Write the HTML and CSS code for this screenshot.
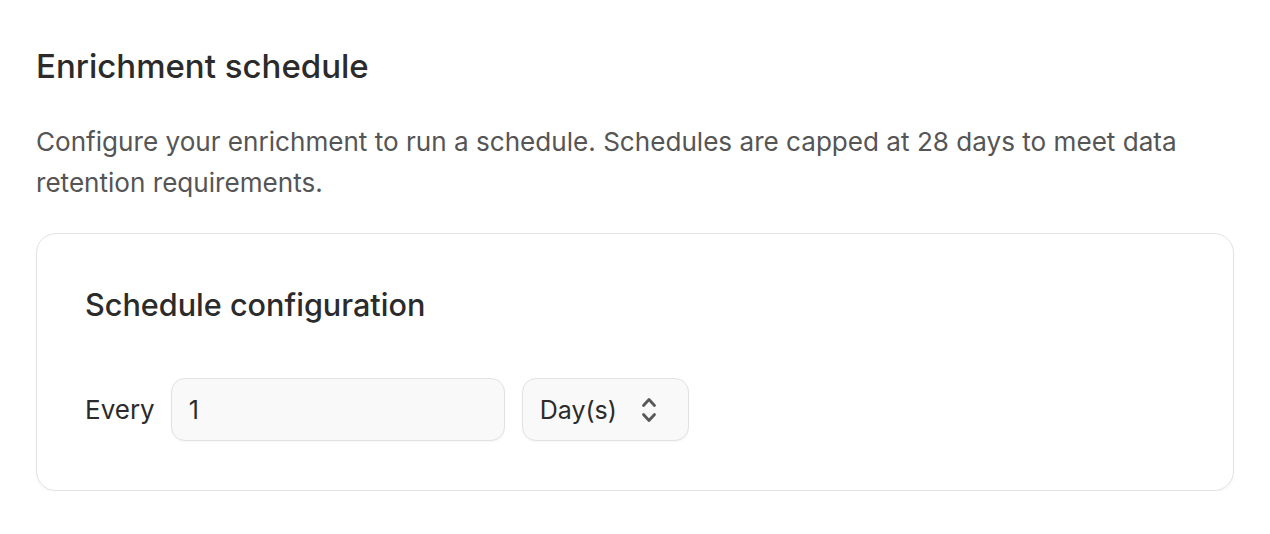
FILE: index.html
```html
<!DOCTYPE html>
<html>
  <head>
    <link rel="stylesheet" href="styles.css">
  </head>
  <body>
    <div class="page">
      <h1>Enrichment schedule</h1>
      <p class="intro">
        Configure your enrichment to run a schedule. Schedules are capped at 28 days to meet data retention requirements.
      </p>

      <div class="card">
        <h2>Schedule configuration</h2>
        <div class="row">
          <span class="label">Every</span>
          <div class="field number">1</div>
          <div class="field select">
            <span>Day(s)</span>
            <svg width="16" height="28" viewBox="0 0 16 28" fill="none" stroke="#585858" stroke-width="2.8" stroke-linecap="round" stroke-linejoin="round">
              <path d="M2.5 9.5 L8 3.5 L13.5 9.5"/>
              <path d="M2.5 18.5 L8 24.5 L13.5 18.5"/>
            </svg>
          </div>
        </div>
      </div>
    </div>
  </body>
</html>
```

FILE: styles.css
```css
body {
    margin: 0;
    background: #fff;
    font-family: Inter, "Noto Sans", sans-serif;
    color: #2b2b2b;
}
.page {
    padding: 44px 36px 0 36px;
}
h1 {
    font-size: 33px;
    font-weight: 500;
    margin: 0;
    line-height: 44px;
}
.intro {
    font-size: 26.1px;
    line-height: 41px;
    color: #555;
    margin: 33px 0 0 0;
    max-width: 1198px;
}
.card {
    margin-top: 30px;
    width: 1198px;
    box-sizing: border-box;
    border: 1px solid #e2e2e2;
    border-radius: 20px;
    box-shadow: 0 2px 3px rgba(0, 0, 0, 0.04);
    padding: 49px 48px 49px 48px;
}
h2 {
    font-size: 30.6px;
    font-weight: 500;
    margin: 0;
    line-height: 44px;
}
.row {
    display: flex;
    align-items: center;
    margin-top: 51px;
}
.label {
    font-size: 26px;
    margin-right: 16px;
}
.field {
    height: 63px;
    box-sizing: border-box;
    border: 1px solid #e2e2e2;
    border-radius: 14px;
    background: #f9f9f9;
    font-size: 25px;
    display: flex;
    align-items: center;
    box-shadow: 0 1px 2px rgba(0, 0, 0, 0.04);
}
.number {
    width: 334px;
    padding-left: 17px;
}
.select {
    width: 167px;
    margin-left: 17px;
    padding: 0 31px 0 17px;
    justify-content: space-between;
}
```
